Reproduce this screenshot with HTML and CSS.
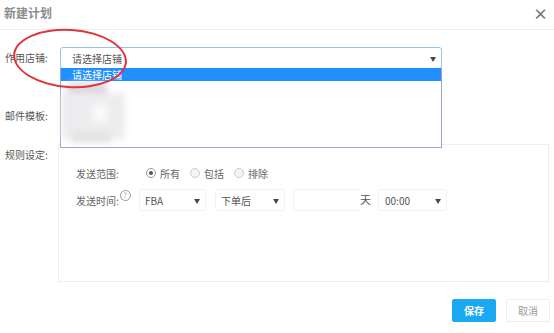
FILE: index.html
```html
<!DOCTYPE html>
<html lang="zh-CN">
<head>
    <meta charset="UTF-8">
    <meta name="viewport" content="width=device-width, initial-scale=1.0">
    <title>新建计划</title>
    <link rel="stylesheet" href="styles.css">
</head>
<body>
    <div class="modal">
        <div class="modalHeader">
            <span class="modalTitle">新建计划</span>
            <span class="closeButton">×</span>
        </div>

        <div class="modalBody">
            <div class="formRow storeRow">
                <label class="formLabel">作用店铺:</label>
                <div class="selectWrap">
                    <div class="fakeSelect focused">
                        <span>请选择店铺</span>
                        <span class="caret">▼</span>
                    </div>
                    <div class="dropList">
                        <div class="dropOption active">请选择店铺</div>
                        <div class="mosaic">
                            <span class="block b1"></span>
                            <span class="block b2"></span>
                            <span class="block b3"></span>
                            <span class="block b4"></span>
                        </div>
                    </div>
                </div>
                <div class="redCircle"></div>
            </div>

            <div class="formRow templateRow">
                <label class="formLabel">邮件模板:</label>
            </div>

            <div class="formRow ruleRow">
                <label class="formLabel">规则设定:</label>
                <div class="ruleBox">
                    <div class="ruleLine">
                        <span class="ruleLabel">发送范围:</span>
                        <div class="radioGroup">
                            <span class="radio checked"></span><span class="radioText">所有</span>
                            <span class="radio"></span><span class="radioText">包括</span>
                            <span class="radio"></span><span class="radioText">排除</span>
                        </div>
                    </div>
                    <div class="ruleLine">
                        <span class="ruleLabel">发送时间:<span class="helpIcon">?</span></span>
                        <div class="smallSelect typeSelect"><span>FBA</span><span class="caret">▼</span></div>
                        <div class="smallSelect whenSelect"><span>下单后</span><span class="caret">▼</span></div>
                        <div class="dayInput"></div>
                        <span class="dayText">天</span>
                        <div class="smallSelect timeSelect"><span>00:00</span><span class="caret">▼</span></div>
                    </div>
                </div>
            </div>
        </div>

        <div class="modalFooter">
            <button class="btn btnPrimary">保存</button>
            <button class="btn btnDefault">取消</button>
        </div>
    </div>
</body>
</html>
```

FILE: styles.css
```css
body {
    margin: 0;
    background: #ffffff;
    font-family: 'Noto Sans CJK SC', 'Noto Sans', sans-serif;
    color: #555555;
}

.modal {
    width: 554px;
    height: 333px;
    position: relative;
}

.modalHeader {
    height: 30px;
    box-sizing: border-box;
    padding: 3px 6px 0 4px;
    border-bottom: 1px solid #eeeeee;
    display: flex;
    justify-content: space-between;
    align-items: flex-start;
}

.modalTitle {
    font-size: 12px;
    line-height: 20px;
    color: #8c8c8c;
    font-weight: bold;
}

.closeButton {
    font-size: 15px;
    line-height: 22px;
    color: #777777;
    font-weight: bold;
}

.modalBody {
    padding: 0 5px 0 5px;
}

.formRow {
    display: flex;
    position: relative;
}

.formLabel {
    width: 55px;
    flex-shrink: 0;
    font-size: 10px;
    color: #555555;
    line-height: 22px;
}

.storeRow {
    margin-top: 17px;
    z-index: 2;
}

.selectWrap {
    position: relative;
    width: 382px;
}

.fakeSelect {
    height: 22px;
    box-sizing: border-box;
    border: 1px solid #8fc6f0;
    border-radius: 3px;
    display: flex;
    justify-content: space-between;
    align-items: center;
    padding: 0 5px 0 11px;
    font-size: 10px;
    color: #555555;
}

.caret {
    font-size: 6px;
    color: #444444;
}

.dropList {
    position: absolute;
    left: 0;
    top: 21px;
    width: 382px;
    height: 80px;
    box-sizing: border-box;
    background: #ffffff;
    border: 1px solid #9aa8c8;
    border-top: none;
}

.dropOption {
    height: 13px;
    line-height: 13px;
    font-size: 10px;
    padding-left: 11px;
}

.dropOption.active {
    background: #1e90ff;
    color: #ffffff;
}

.mosaic {
    position: relative;
    height: 62px;
    filter: blur(3px);
}

.block {
    position: absolute;
    background: #e4e4e6;
}

.b1 { left: 6px; top: 2px; width: 40px; height: 14px; background: #ddd6df; }
.b2 { left: 0; top: 12px; width: 64px; height: 46px; background: #ededef; }
.b3 { left: 32px; top: 24px; width: 14px; height: 16px; background: #fbfbfb; }
.b4 { left: 10px; top: 50px; width: 40px; height: 12px; background: #e4e4e6; }

.redCircle {
    position: absolute;
    left: 8px;
    top: -18px;
    width: 114px;
    height: 59px;
    box-sizing: border-box;
    border: 2px solid #e0343a;
    border-radius: 50%;
    transform: rotate(4deg);
    pointer-events: none;
}

.templateRow {
    margin-top: 36px;
}

.ruleRow {
    margin-top: 17px;
}

.ruleRow .formLabel {
    width: 53px;
    line-height: 20px;
    padding-top: 1px;
}

.ruleBox {
    width: 491px;
    height: 138px;
    box-sizing: border-box;
    border: 1px solid #eeeeee;
    padding: 20px 0 0 17px;
}

.ruleLine {
    display: flex;
    align-items: center;
    font-size: 10px;
    color: #666666;
}

.ruleLine + .ruleLine {
    margin-top: 8px;
}

.ruleLabel {
    width: 63px;
    flex-shrink: 0;
    display: flex;
    align-items: flex-start;
}

.helpIcon {
    width: 9px;
    height: 9px;
    border: 1px solid #999999;
    border-radius: 50%;
    font-size: 7px;
    line-height: 9px;
    text-align: center;
    color: #999999;
    margin: -3px 0 0 1px;
}

.radioGroup {
    display: flex;
    align-items: center;
    height: 16px;
    padding-left: 7px;
}

.radio {
    width: 8px;
    height: 8px;
    border: 1px solid #cccccc;
    border-radius: 50%;
    background: #f4f4f4;
    position: relative;
}

.radio.checked {
    background: #ffffff;
    border-color: #999999;
}

.radio.checked::after {
    content: '';
    position: absolute;
    left: 2px;
    top: 2px;
    width: 4px;
    height: 4px;
    border-radius: 50%;
    background: #555555;
}

.radioText {
    margin: 0 10px 0 4px;
}

.smallSelect {
    height: 22px;
    box-sizing: border-box;
    border: 1px solid #f2f2f2;
    border-radius: 3px;
    display: flex;
    justify-content: space-between;
    align-items: center;
    padding: 0 5px;
    color: #555555;
}

.typeSelect {
    width: 67px;
    margin-right: 9px;
}

.whenSelect {
    width: 70px;
    margin-right: 8px;
}

.timeSelect {
    width: 69px;
    padding-left: 6px;
}

.dayInput {
    width: 67px;
    height: 22px;
    box-sizing: border-box;
    border: 1px solid #f2f2f2;
    border-right: none;
    border-radius: 3px 0 0 3px;
}

.dayText {
    width: 18px;
    font-size: 11px;
    color: #555555;
    margin-top: -2px;
}

.modalFooter {
    display: flex;
    justify-content: flex-end;
    gap: 10px;
    padding: 17px 4px 0 0;
}

.btn {
    height: 23px;
    width: 44px;
    font-family: inherit;
    font-size: 10px;
    border-radius: 2px;
    padding: 0;
}

.btnPrimary {
    background: #1aa8f2;
    border: 1px solid #1aa8f2;
    color: #ffffff;
    font-weight: bold;
}

.btnDefault {
    background: #ffffff;
    border: 1px solid #eeeeee;
    color: #999999;
}
```
